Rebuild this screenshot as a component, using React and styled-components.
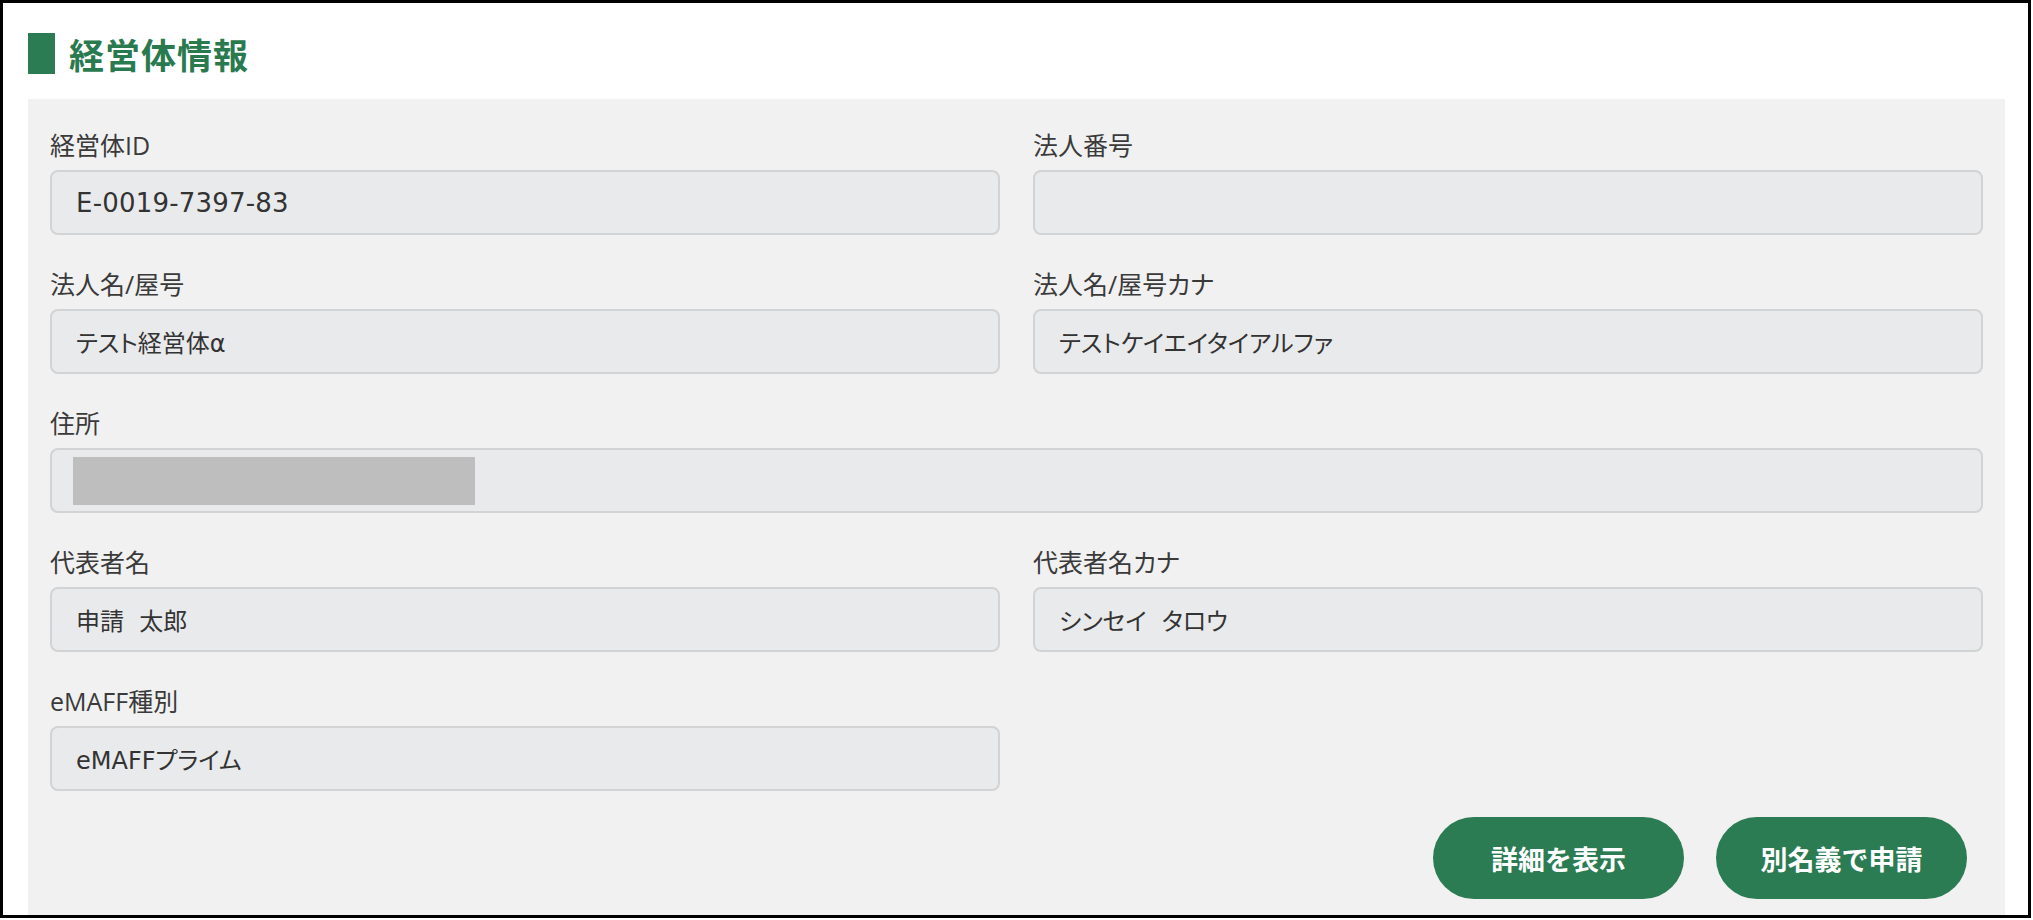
import React from "react";
import styled, { createGlobalStyle } from "styled-components";

const GlobalStyle = createGlobalStyle`
  body {
    margin: 0;
    background: #ffffff;
    font-family: "Open Sans", "Noto Sans CJK JP", sans-serif;
    color: #333333;
  }
`;

const Frame = styled.div`
  box-sizing: border-box;
  width: 2031px;
  height: 918px;
  border: 3px solid #000000;
  background: #ffffff;
  overflow: hidden;
  padding: 30px 23px 0 25px;
`;

const Heading = styled.h2`
  display: flex;
  align-items: center;
  gap: 14px;
  margin: 0 0 25px;
  height: 41px;
  font-size: 35px;
  font-weight: 700;
  color: #2a7a50;
  font-family: "Noto Sans CJK JP", sans-serif;
  letter-spacing: 1px;

  &::before {
    content: "";
    width: 27px;
    height: 41px;
    background: #2b7b53;
  }
`;

const Panel = styled.section`
  box-sizing: border-box;
  background: #f1f1f1;
  padding: 29px 22px 30px;
  min-height: 820px;
`;

const Grid = styled.div`
  display: grid;
  grid-template-columns: 1fr 1fr;
  column-gap: 33px;
  row-gap: 32px;
`;

const Field = styled.div`
  display: flex;
  flex-direction: column;
  gap: 8px;
  grid-column: ${(p) => (p.$wide ? "1 / span 2" : "auto")};
`;

const Label = styled.label`
  font-size: 25px;
  line-height: 34px;
  color: #3a3a3a;
  font-feature-settings: "palt";
`;

const Value = styled.div`
  box-sizing: border-box;
  height: 65px;
  display: flex;
  align-items: center;
  padding: 0 24px;
  background: #e9eaec;
  border: 2px solid #d2d3d5;
  border-radius: 8px;
  font-family: "DejaVu Sans", "Noto Sans CJK JP", sans-serif;
  font-size: ${(p) => (p.$numeric ? "26px" : "24px")};
  letter-spacing: ${(p) => (p.$numeric ? "0.2px" : "0")};
  color: #333333;
  font-feature-settings: "palt";
  white-space: pre;
`;

const Mask = styled.span`
  display: block;
  width: 402px;
  height: 48px;
  margin-left: -3px;
  background: #bebebe;
`;

const Actions = styled.div`
  display: flex;
  justify-content: flex-end;
  gap: 32px;
  margin-top: 26px;
  padding-right: 16px;
`;

const Button = styled.button`
  width: 251px;
  height: 82px;
  border: none;
  border-radius: 41px;
  background: #2b7b53;
  color: #ffffff;
  font-family: "Noto Sans CJK JP", sans-serif;
  font-size: 27px;
  font-weight: 700;
  cursor: pointer;
`;

const fields = [
  { label: "経営体ID", value: "E-0019-7397-83", numeric: true },
  { label: "法人番号", value: "" },
  { label: "法人名/屋号", value: "テスト経営体α" },
  { label: "法人名/屋号カナ", value: "テストケイエイタイアルファ" },
  { label: "住所", masked: true, wide: true },
  { label: "代表者名", value: "申請  太郎" },
  { label: "代表者名カナ", value: "シンセイ  タロウ" },
  { label: "eMAFF種別", value: "eMAFFプライム" },
];

export default function App() {
  return (
    <>
      <GlobalStyle />
      <Frame>
        <Heading>経営体情報</Heading>
        <Panel>
          <Grid>
            {fields.map((f) => (
              <Field key={f.label} $wide={f.wide}>
                <Label>{f.label}</Label>
                <Value $numeric={f.numeric}>{f.masked ? <Mask /> : f.value}</Value>
              </Field>
            ))}
          </Grid>
          <Actions>
            <Button>詳細を表示</Button>
            <Button>別名義で申請</Button>
          </Actions>
        </Panel>
      </Frame>
    </>
  );
}
